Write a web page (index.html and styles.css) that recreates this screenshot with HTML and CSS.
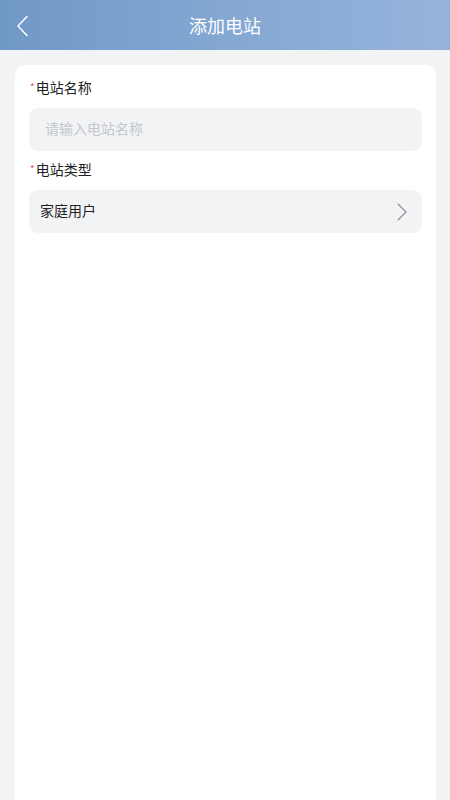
FILE: index.html
```html
<!DOCTYPE html>
<html lang="zh">
<head>
<meta charset="utf-8">
<link rel="stylesheet" href="styles.css">
</head>
<body>
<header class="nav">
  <span class="back">
    <svg width="14" height="22" viewBox="0 0 14 22"><path d="M11 1.5 L2 11 L11 20.5" fill="none" stroke="#ffffff" stroke-width="1.5" stroke-linecap="round" stroke-linejoin="round"/></svg>
  </span>
  <h1 class="title">添加电站</h1>
</header>
<main class="page">
  <section class="card">
    <div class="label"><span class="req">*</span>电站名称</div>
    <div class="field input"><span class="placeholder">请输入电站名称</span></div>
    <div class="label"><span class="req">*</span>电站类型</div>
    <div class="field select">
      <span class="value">家庭用户</span>
      <svg class="chev" width="12" height="18" viewBox="0 0 12 18"><path d="M2 1 L10 9 L2 17" fill="none" stroke="#8e9197" stroke-width="1.1" stroke-linecap="round" stroke-linejoin="round"/></svg>
    </div>
  </section>
</main>
</body>
</html>
```
FILE: styles.css
```css
* { box-sizing: border-box; }
html, body { margin: 0; padding: 0; }
body {
  width: 450px;
  height: 800px;
  overflow: hidden;
  background: #f2f3f5;
  font-family: "Noto Sans CJK SC", "Noto Sans", sans-serif;
  color: #222;
}
.nav {
  height: 50px;
  background: linear-gradient(90deg, #7098c6 0%, #84a7d3 50%, #95b4dc 100%);
  display: flex;
  align-items: center;
  justify-content: center;
  position: relative;
}
.back {
  position: absolute;
  left: 16px;
  top: 15px;
  display: flex;
}
.title {
  margin: 0;
  font-size: 18px;
  font-weight: 400;
  color: #ffffff;
  line-height: 24px;
}
.page {
  padding: 15px 14px 0 15px;
  height: 750px;
}
.card {
  background: #ffffff;
  border-radius: 10px 10px 0 0;
  height: 735px;
  padding: 11px 14px 0 14px;
  display: flex;
  flex-direction: column;
}
.label {
  font-size: 14px;
  line-height: 22px;
  color: #222;
  height: 22px;
  margin-bottom: 10px;
}
.req {
  color: #e85555;
  font-size: 10px;
  vertical-align: 2px;
  margin-left: 1px;
  margin-right: 1px;
}
.field {
  height: 43px;
  background: #f2f3f5;
  border-radius: 9px;
  display: flex;
  align-items: center;
  font-size: 14px;
  margin-bottom: 7px;
  padding-bottom: 3px;
}
.input { padding-left: 16px; }
.placeholder { color: #c3c6cc; }
.select {
  padding-left: 11px;
  padding-right: 14px;
  justify-content: space-between;
}
.value { color: #222; }
.chev { display: block; margin-top: 3px; }
```
